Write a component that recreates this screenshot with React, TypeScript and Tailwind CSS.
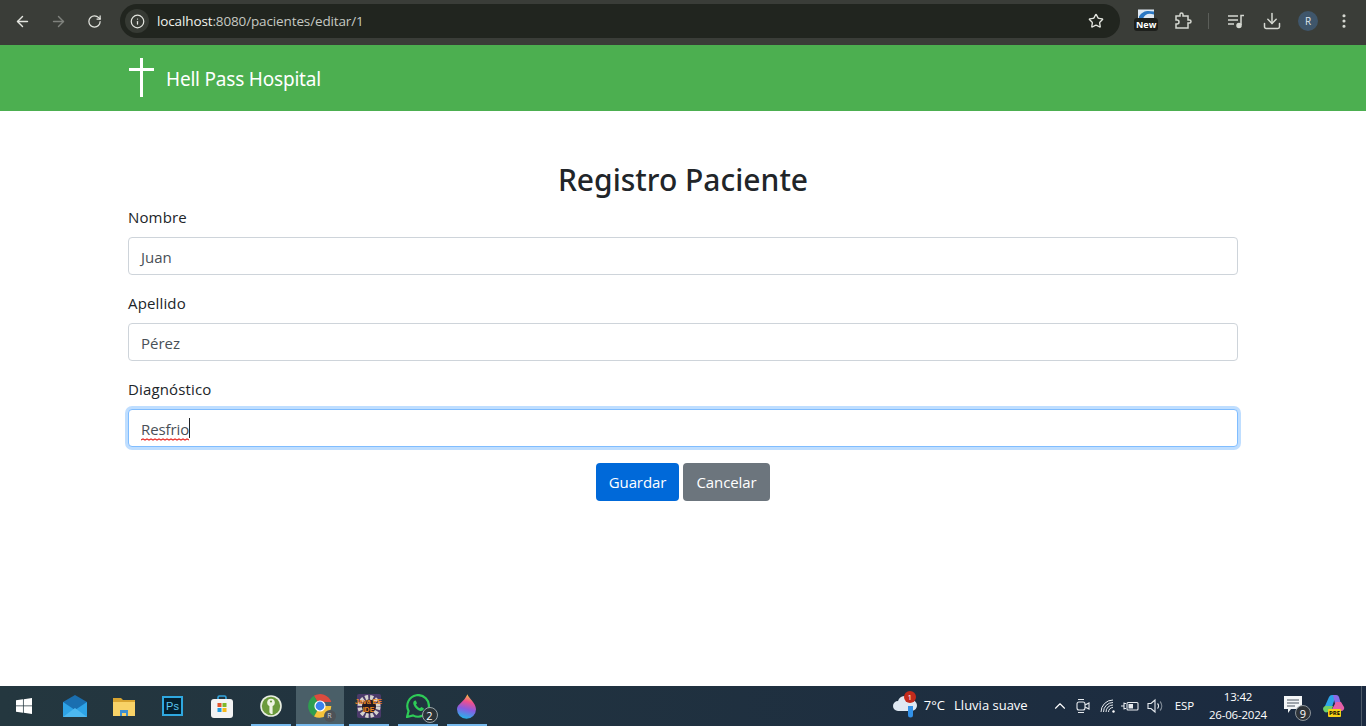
import { ArrowLeft, ArrowRight, ChevronUp, Download, EllipsisVertical, Info, RotateCw, Star } from "lucide-react";

const FIELDS = [
  { label: "Nombre", value: "Juan" },
  { label: "Apellido", value: "Pérez" },
];

function Toolbar() {
  return (
    <div className="flex h-[45px] items-start bg-[#3a3d38] font-['Open_Sans',sans-serif] text-[#e3e5df]">
      <div className="flex h-[42px] w-[120px] items-center pl-[4px]">
        <div className="flex w-[36px] justify-center"><ArrowLeft size={17} strokeWidth={2} /></div>
        <div className="flex w-[36px] justify-center text-[#7f827d]"><ArrowRight size={17} strokeWidth={2} /></div>
        <div className="flex w-[36px] justify-center"><RotateCw size={15} strokeWidth={2} /></div>
      </div>
      <div className="mt-[4px] flex h-[34px] w-[1000px] items-center rounded-full bg-[#21251f] pl-[5px] pr-[16px]">
        <div className="flex h-[24px] w-[24px] items-center justify-center rounded-full bg-[#363a34]">
          <Info size={15} strokeWidth={2} />
        </div>
        <div className="ml-[8px] flex-1 text-[13.5px] tracking-[-0.13px] text-[#c6c9c3]">
          <span className="text-[#f1f3ed]">localhost</span>:8080/pacientes/editar/1
        </div>
        <Star size={16} strokeWidth={2} />
      </div>
      <div className="flex h-[42px] flex-1 items-center">
        <div className="relative ml-[15px] h-[28px] w-[22px]">
          <svg viewBox="0 0 16 9" className="absolute left-[3px] top-[2px] h-[10px] w-[16px]">
            <rect width="16" height="9" fill="#dfe9f3" />
            <path d="M1 7 C5 1 9 1 16 2 L16 5 C10 3 7 5 5 9 L1 9 Z" fill="#2b78c4" />
          </svg>
          <div className="absolute left-[-1px] top-[11px] rounded-[3px] bg-[#1d1f1c] px-[2px] text-[9px] font-bold leading-[13px] text-white">New</div>
        </div>
        <svg viewBox="0 0 18 18" className="ml-[17px] h-[18px] w-[18px]" fill="none" stroke="#d5d8d1" strokeWidth="1.5">
          <path d="M2 4h4V2.5a1.5 1.5 0 0 1 3 0V4h5v4h1.5a1.5 1.5 0 0 1 0 3H14v5H2v-4h1a2 2 0 0 0 0-4H2Z" />
        </svg>
        <div className="ml-[16px] h-[16px] w-px bg-[#5b5e59]" />
        <svg viewBox="0 0 18 18" className="ml-[18px] h-[18px] w-[18px]" fill="none" stroke="#d5d8d1" strokeWidth="1.5">
          <path d="M1 4h10M1 8h10M1 12h6" />
          <path d="M14 13V3.5h3" />
          <circle cx="12" cy="13.5" r="2" fill="#d5d8d1" />
        </svg>
        <Download size={20} strokeWidth={1.8} className="ml-[17px] text-[#d5d8d1]" />
        <div className="ml-[16px] flex h-[20px] w-[20px] items-center justify-center rounded-full bg-[#3f566b] text-[10px] text-[#dfe6ec]">R</div>
        <EllipsisVertical size={18} strokeWidth={2.2} className="ml-[17px] text-[#d5d8d1]" />
      </div>
    </div>
  );
}

function Navbar() {
  return (
    <div className="flex h-[66px] items-center bg-[#4caf50] pl-[128px] text-white">
      <svg viewBox="0 0 26 40" className="h-[40px] w-[26px]" fill="#ffffff">
        <rect x="12" y="0" width="3" height="39" />
        <rect x="1" y="10" width="25" height="3" />
      </svg>
      <span className="ml-[12px] mt-[2px] text-[19px] tracking-[-0.2px]">Hell Pass Hospital</span>
    </div>
  );
}

function Field({ label, value }: { label: string; value: string }) {
  return (
    <div className="mb-[16px]">
      <div className="mb-[8px] text-[15px] leading-[24px] tracking-[0.15px] text-[#212529]">{label}</div>
      <div className="flex h-[38px] items-center rounded-[4px] border border-[#ced4da] bg-white px-[12px] pt-[2px] text-[15px] text-[#495057]">
        {value}
      </div>
    </div>
  );
}

function PacienteForm() {
  return (
    <div className="flex-1 bg-white px-[128px] pt-[50px] font-['Open_Sans',sans-serif]">
      <h1 className="mb-[6px] text-center font-['Noto_Sans',sans-serif] text-[30px] font-medium leading-[38px] text-[#212529]">Registro Paciente</h1>
      {FIELDS.map((f) => (
        <Field key={f.label} label={f.label} value={f.value} />
      ))}
      <div className="mb-[16px]">
        <div className="mb-[8px] text-[15px] leading-[24px] tracking-[0.15px] text-[#212529]">Diagnóstico</div>
        <div className="flex h-[38px] items-center rounded-[4px] border border-[#80bdff] bg-white px-[12px] pt-[2px] text-[15px] tracking-[-0.1px] text-[#495057] shadow-[0_0_0_3px_rgba(0,123,255,0.25)]">
          <span className="relative">
            Resfrio
            <svg viewBox="0 0 48 3" className="absolute bottom-[-1px] left-0 h-[3px] w-[48px]" fill="none" stroke="#e8302a" strokeWidth="1.2">
              <path d="M0 2 L2 1 L4 2 L6 1 L8 2 L10 1 L12 2 L14 1 L16 2 L18 1 L20 2 L22 1 L24 2 L26 1 L28 2 L30 1 L32 2 L34 1 L36 2 L38 1 L40 2 L42 1 L44 2 L46 1 L48 2" />
            </svg>
          </span>
          <span className="mb-[2px] h-[20px] w-px bg-[#212529]" />
        </div>
      </div>
      <div className="flex justify-center gap-[4px]">
        <button className="h-[38px] w-[83px] rounded-[4px] bg-[#0069d9] text-[15px] tracking-[-0.1px] text-white">Guardar</button>
        <button className="h-[38px] w-[87px] rounded-[4px] bg-[#6c757d] text-[15px] tracking-[-0.1px] text-white">Cancelar</button>
      </div>
    </div>
  );
}

function TaskSlot({ active, open, children }: { active?: boolean; open?: boolean; children: React.ReactNode }) {
  return (
    <div className="relative flex h-[40px] w-[49px] items-center justify-center pr-[2px]">
      {active && <div className="absolute inset-y-0 left-0 right-[1px] bg-[#4a5f68]" />}
      <div className="relative">{children}</div>
      {open && <div className={`absolute bottom-0 h-[2px] bg-[#76b9ed] ${active ? "left-0 right-[1px]" : "left-[4px] right-[5px]"}`} />}
    </div>
  );
}

function Taskbar() {
  return (
    <div className="flex h-[40px] items-center bg-gradient-to-r from-[#24373f] to-[#1b2a40] font-['Open_Sans',sans-serif] text-white">
      <div className="flex h-[40px] w-[51px] items-center justify-center pr-[4px]">
        <svg viewBox="0 0 17 17" className="h-[16px] w-[16px]" fill="#ffffff">
          <path d="M0 2.4 7.4 1.3V8H0ZM8.2 1.2 17 0V8H8.2ZM0 8.8h7.4v6.9L0 14.6ZM8.2 8.8H17V17l-8.8-1.2Z" />
        </svg>
      </div>
      <TaskSlot>
        <svg viewBox="0 0 24 22" className="h-[22px] w-[24px]">
          <path d="M0 7 12 0l12 7v15H0Z" fill="#1a6fb0" />
          <path d="M0 7l12 8 12-8v15H0Z" fill="#2ea3e6" />
          <path d="M0 22 12 13l12 9Z" fill="#4db8f0" />
        </svg>
      </TaskSlot>
      <TaskSlot>
        <svg viewBox="0 0 22 19" className="h-[19px] w-[22px]">
          <path d="M0 1h8l2 2h12v5H0Z" fill="#d9a531" />
          <path d="M0 5h22v14H0Z" fill="#f8d267" />
          <path d="M7 19v-6h8v6h-2v-3H9v3Z" fill="#3d8fd1" />
        </svg>
      </TaskSlot>
      <TaskSlot>
        <div className="flex h-[20px] w-[21px] items-center justify-center border-2 border-[#2fa8e0] bg-[#04202f] font-['Liberation_Sans',sans-serif] text-[11px] text-[#5cc6f2]">Ps</div>
      </TaskSlot>
      <TaskSlot>
        <svg viewBox="0 0 24 24" className="h-[24px] w-[24px]" fill="none">
          <path d="M8 6V3.5A1.5 1.5 0 0 1 9.5 2h5A1.5 1.5 0 0 1 16 3.5V6" stroke="#35a7e0" strokeWidth="1.6" />
          <rect x="1" y="5" width="22" height="19" rx="3" fill="#f3f3f3" />
          <rect x="7.5" y="9" width="4" height="4" fill="#e2532b" />
          <rect x="12.5" y="9" width="4" height="4" fill="#7fb82a" />
          <rect x="7.5" y="14" width="4" height="4" fill="#1f9be0" />
          <rect x="12.5" y="14" width="4" height="4" fill="#f6b91a" />
        </svg>
      </TaskSlot>
      <TaskSlot open>
        <svg viewBox="0 0 22 22" className="h-[22px] w-[22px]">
          <circle cx="11" cy="11" r="10.8" fill="#e9eee2" />
          <circle cx="11" cy="11" r="9.2" fill="#6b9a3c" />
          <circle cx="11" cy="7.5" r="3.8" fill="#eef3e2" />
          <path d="M9.4 9h3.2v10h-1.6l-1.6-1.6Z" fill="#eef3e2" />
          <circle cx="11" cy="6.5" r="1.1" fill="#6b9a3c" />
        </svg>
      </TaskSlot>
      <TaskSlot active open>
        <div className="relative h-[24px] w-[24px]">
          <svg viewBox="0 0 24 24" className="h-[24px] w-[24px]">
            <path d="M12 12 5.9 1.8A12 12 0 0 1 23.3 8H12Z" fill="#dd4b3e" />
            <path d="M12 12 5.9 1.8A12 12 0 0 0 6 22.4Z" fill="#2f9e4f" />
            <path d="M12 12h11.3A12 12 0 0 1 6 22.4Z" fill="#f5c33b" />
            <circle cx="12" cy="12" r="5.6" fill="#ffffff" />
            <circle cx="12" cy="12" r="4.4" fill="#3b82ee" />
          </svg>
          <div className="absolute bottom-[-4px] right-[-4px] flex h-[12px] w-[12px] items-center justify-center rounded-full bg-[#4d5257] text-[7px] text-[#cfd4d8]">R</div>
        </div>
      </TaskSlot>
      <TaskSlot open>
        <div className="relative flex h-[24px] w-[24px] items-center justify-center rounded-[2px] bg-[#4a3a6a]">
          <svg viewBox="0 0 24 24" className="absolute inset-0 h-[24px] w-[24px]">
            <circle cx="12" cy="12.5" r="9" fill="none" stroke="#d6d3ce" strokeWidth="5" strokeDasharray="3 1.8" />
            <circle cx="12" cy="12.5" r="7" fill="#241a20" />
          </svg>
          <div className="relative whitespace-nowrap text-center font-['Liberation_Sans',sans-serif] text-[7px] font-bold leading-[8px] text-[#ee8a22]">Java EE<br />IDE</div>
        </div>
      </TaskSlot>
      <TaskSlot open>
        <div className="relative h-[24px] w-[24px]">
          <svg viewBox="0 0 24 24" className="h-[24px] w-[24px]">
            <path d="M1 23 2.6 17A10.8 10.8 0 1 1 7 21.4Z" fill="none" stroke="#2ecb57" strokeWidth="2.2" />
            <path d="M8.5 6.8c-1 .5-1.6 2-1 3.6 1.2 3.2 3.6 5.5 6.6 6.5 1.6.4 3-.2 3.5-1.3l.2-1.3-2.6-1.3-1.2 1.3c-1.8-.7-3.2-2-4-3.8l1-1.3-1.2-2.6Z" fill="#2ecb57" />
          </svg>
          <div className="absolute bottom-[-5px] right-[-8px] flex h-[16px] w-[16px] items-center justify-center rounded-full border border-[#9aa5aa] bg-[#2b3338] text-[11px] leading-none text-white">2</div>
        </div>
      </TaskSlot>
      <TaskSlot open>
        <svg viewBox="0 0 20 26" className="h-[25px] w-[19px]">
          <defs>
            <linearGradient id="drop" x1="0.6" y1="0" x2="0.4" y2="1">
              <stop offset="0" stopColor="#f7c63c" />
              <stop offset="0.3" stopColor="#ef4f8e" />
              <stop offset="0.6" stopColor="#8a5be0" />
              <stop offset="1" stopColor="#22b8ea" />
            </linearGradient>
          </defs>
          <path d="M11 0c1 4 9 9 9 16a10 10 0 0 1-20 0C0 10 7 9 11 0Z" fill="url(#drop)" />
        </svg>
      </TaskSlot>

      <div className="flex-1" />

      <div className="relative h-[24px] w-[26px]">
        <svg viewBox="0 0 26 24" className="h-[24px] w-[26px]">
          <path d="M6 17a5 5 0 0 1 0-10 7 7 0 0 1 13-1 5.5 5.5 0 0 1 1 11Z" fill="#dfe8f2" />
          <path d="M16 12h5v9a2.5 2.5 0 0 1-5 0Z" fill="#3291e8" />
        </svg>
        <div className="absolute right-[2px] top-[-3px] flex h-[12px] w-[12px] items-center justify-center rounded-full bg-[#c42b1c] text-[8px] leading-none text-white">1</div>
      </div>
      <span className="ml-[6px] text-[13px]">7°C</span>
      <span className="ml-[9px] text-[13px]">Lluvia suave</span>
      <ChevronUp size={18} strokeWidth={1.5} className="ml-[23px]" />
      <svg viewBox="0 0 16 18" className="ml-[6px] h-[18px] w-[16px]" fill="none" stroke="#e6eaee" strokeWidth="1.1">
        <rect x="2" y="5" width="8" height="8" rx="2" />
        <path d="M10 8l4-2v6l-4-2M3 2.5h6M3 15.5h6" />
      </svg>
      <svg viewBox="0 0 16 14" className="ml-[9px] h-[14px] w-[16px]" fill="none" stroke="#e6eaee" strokeWidth="1">
        <path d="M1 13A12 12 0 0 1 13 1M3.5 13A9.5 9.5 0 0 1 13 3.5M6 13a7 7 0 0 1 7-7M8.5 13A4.5 4.5 0 0 1 13 8.5" />
        <circle cx="13.5" cy="12.5" r="1.2" fill="#ffffff" stroke="none" />
      </svg>
      <svg viewBox="0 0 18 12" className="ml-[5px] h-[12px] w-[18px]" fill="none" stroke="#e6eaee" strokeWidth="1.1">
        <rect x="6" y="2.5" width="11" height="7.5" rx="1" />
        <rect x="7.5" y="4" width="4.5" height="4.5" fill="#e6eaee" stroke="none" />
        <path d="M0 6h3M3 2.5v7M3 3.5h2M3 8.5h2" />
      </svg>
      <svg viewBox="0 0 18 16" className="ml-[8px] h-[16px] w-[18px]" fill="none" stroke="#e6eaee" strokeWidth="1.1">
        <path d="M1 5.5h3L8 2v12l-4-3.5H1Z" />
        <path d="M10.5 5.5a3.5 3.5 0 0 1 0 5" />
        <path d="M13 3.5a6.5 6.5 0 0 1 0 9" stroke="#7f8a96" />
      </svg>
      <span className="ml-[10px] text-[11.5px] tracking-[-0.1px]">ESP</span>
      <div className="ml-[13px] w-[62px] text-center text-[11.5px] leading-[18px] tracking-[-0.2px]">
        <div>13:42</div>
        <div>26-06-2024</div>
      </div>
      <div className="relative ml-[13px] h-[24px] w-[26px]">
        <svg viewBox="0 0 18 18" className="absolute left-[2px] top-[2px] h-[18px] w-[18px]">
          <path d="M0 0h18v13H7l-3 4v-4H0Z" fill="#f4f6f8" />
          <path d="M3 4h12M3 7h12M3 10h8" stroke="#4b5560" strokeWidth="1" />
        </svg>
        <div className="absolute bottom-[-3px] right-[-3px] flex h-[16px] w-[16px] items-center justify-center rounded-full border border-[#8c949b] bg-[#2e3338] text-[11px] leading-none">9</div>
      </div>
      <div className="relative ml-[15px] h-[24px] w-[22px]">
        <svg viewBox="0 0 22 20" className="h-[20px] w-[22px]">
          <path d="M2 12 6 3a3.500 3.500 0 0 1 3-2h4L8 16H5a3 3 0 0 1-3-4Z" fill="#2ea3e8" />
          <path d="M10 1h3a3 3 0 0 1 3 2l2 7h-6Z" fill="#8b6be8" />
          <path d="M13 8h5l3 5a3 3 0 0 1-3 4H8Z" fill="#e45fa8" />
          <path d="M2 12h8l-2 6H5a3 3 0 0 1-3-6Z" fill="#6fd06a" />
        </svg>
        <div className="absolute bottom-[1px] left-[5px] rounded-[1px] bg-[#f7d117] px-[1px] text-[6px] font-bold leading-[8px] text-black">PRE</div>
      </div>
      <div className="ml-[16px] h-[40px] w-px bg-[#4d5a68]" />
      <div className="w-[4px]" />
    </div>
  );
}

export default function App() {
  return (
    <div className="flex h-[726px] w-[1366px] flex-col overflow-hidden">
      <Toolbar />
      <Navbar />
      <PacienteForm />
      <Taskbar />
    </div>
  );
}
